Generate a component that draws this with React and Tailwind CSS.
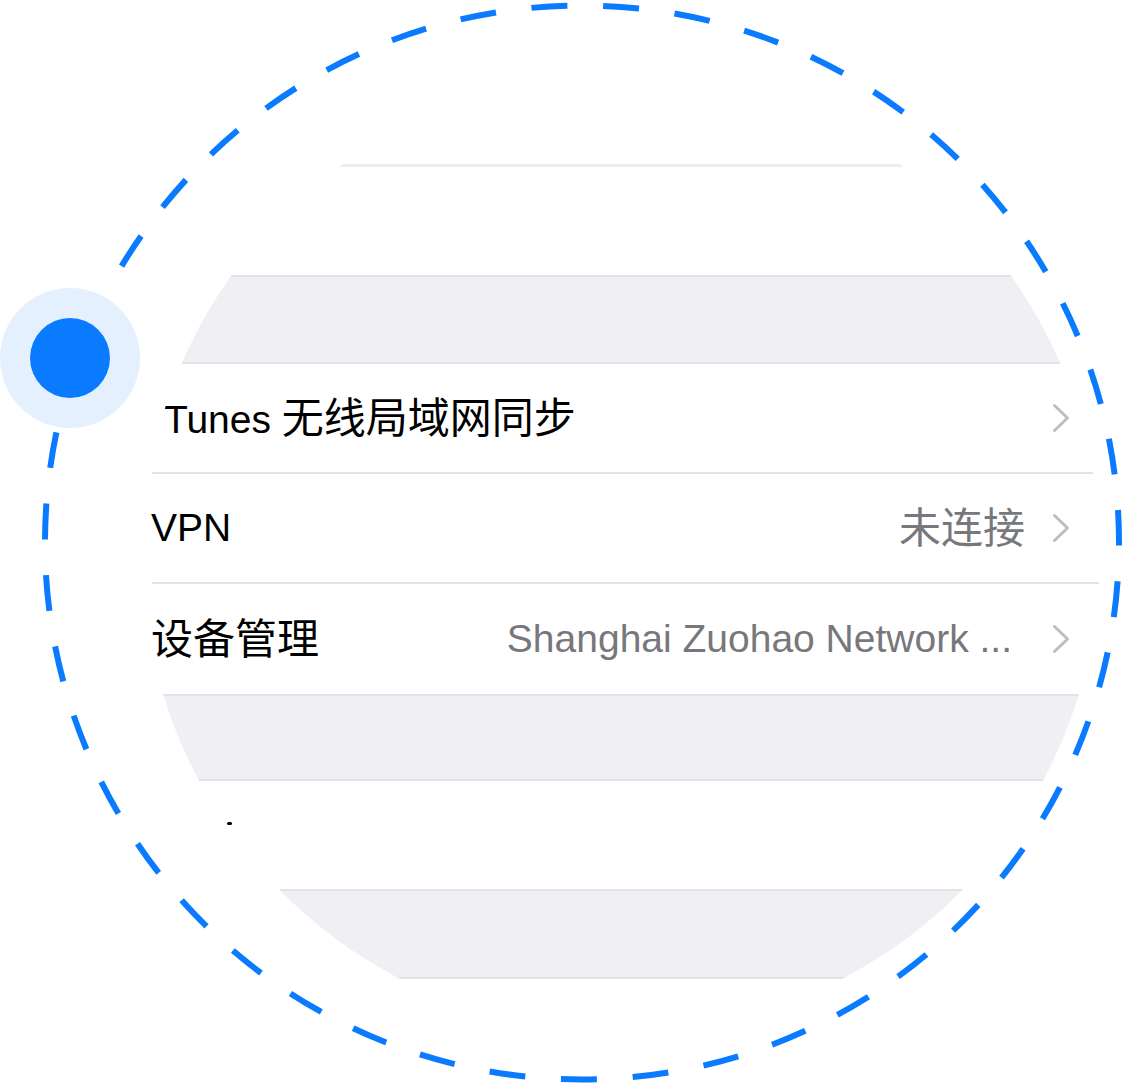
import React from "react";

const Chevron = () => (
  <svg width="18" height="30" viewBox="0 0 18 30" className="shrink-0">
    <polyline
      points="2.5,2.5 15.5,15 2.5,27.5"
      fill="none"
      stroke="#bdbdc2"
      strokeWidth="3"
      strokeLinecap="round"
      strokeLinejoin="round"
    />
  </svg>
);

const Line = ({ inset }) => (
  <div className={`h-[2px] shrink-0 bg-[#e2e2e7] ${inset ? "ml-[10px]" : ""}`} />
);

const Gray = ({ h }) => <div className={`${h} shrink-0 bg-[#efeff4]`} />;

const Row = ({ h, children, value }) => (
  <div className={`${h} shrink-0 flex items-center pl-[9px] pr-[30px] bg-white`}>
    <div className="flex-1 flex items-baseline text-black whitespace-nowrap">{children}</div>
    {value}
    <Chevron />
  </div>
);

export default function App() {
  return (
    <div className="relative w-[1124px] h-[1084px] bg-white overflow-hidden font-[Liberation_Sans,Noto_Sans_CJK_SC,sans-serif]">
      {/* settings list seen through the round lens */}
      <div className="ml-[142px] pt-[75px]">
        <div className="w-[958px] h-[958px] rounded-full overflow-hidden bg-white flex flex-col">
          <div className="h-[89px] shrink-0" />
          <div className="h-[3px] shrink-0 bg-[#ececee]" />
          <div className="h-[108px] shrink-0" />
          <Line />
          <Gray h="h-[85px]" />
          <Line />
          <Row h="h-[108px]">
            <span className="ml-[13px] text-[39px]">Tunes&nbsp;</span>
            <span className="text-[42px]">无线局域网同步</span>
          </Row>
          <Line inset />
          <Row
            h="h-[108px]"
            value={<span className="mr-[27px] text-[42px] text-[#77777c]">未连接</span>}
          >
            <span className="text-[39px]">VPN</span>
          </Row>
          <Line inset />
          <Row
            h="h-[110px]"
            value={
              <span className="mr-[40px] text-[39px] text-[#77777c] whitespace-nowrap">
                Shanghai Zuohao Network ...
              </span>
            }
          >
            <span className="text-[42px]">设备管理</span>
          </Row>
          <Line />
          <Gray h="h-[83px]" />
          <Line />
          <div className="h-[108px] shrink-0 bg-white">
            <div className="ml-[85px] mt-[41px] w-[5px] h-[3px] rounded-full bg-black" />
          </div>
          <Line />
          <Gray h="h-[86px]" />
          <Line />
        </div>
      </div>

      {/* dashed ring */}
      <svg className="absolute inset-0 pointer-events-none" width="1124" height="1084">
        <circle
          cx="582"
          cy="542.5"
          r="537"
          fill="none"
          stroke="#0a7bff"
          strokeWidth="6"
          strokeDasharray="36 35.79"
          strokeDashoffset="33"
        />
      </svg>

      {/* marker */}
      <div className="absolute left-0 top-[288px] w-[140px] h-[140px] rounded-full bg-[#e5f0fe] flex items-center justify-center">
        <div className="w-[80px] h-[80px] rounded-full bg-[#0a7bff]" />
      </div>
    </div>
  );
}
